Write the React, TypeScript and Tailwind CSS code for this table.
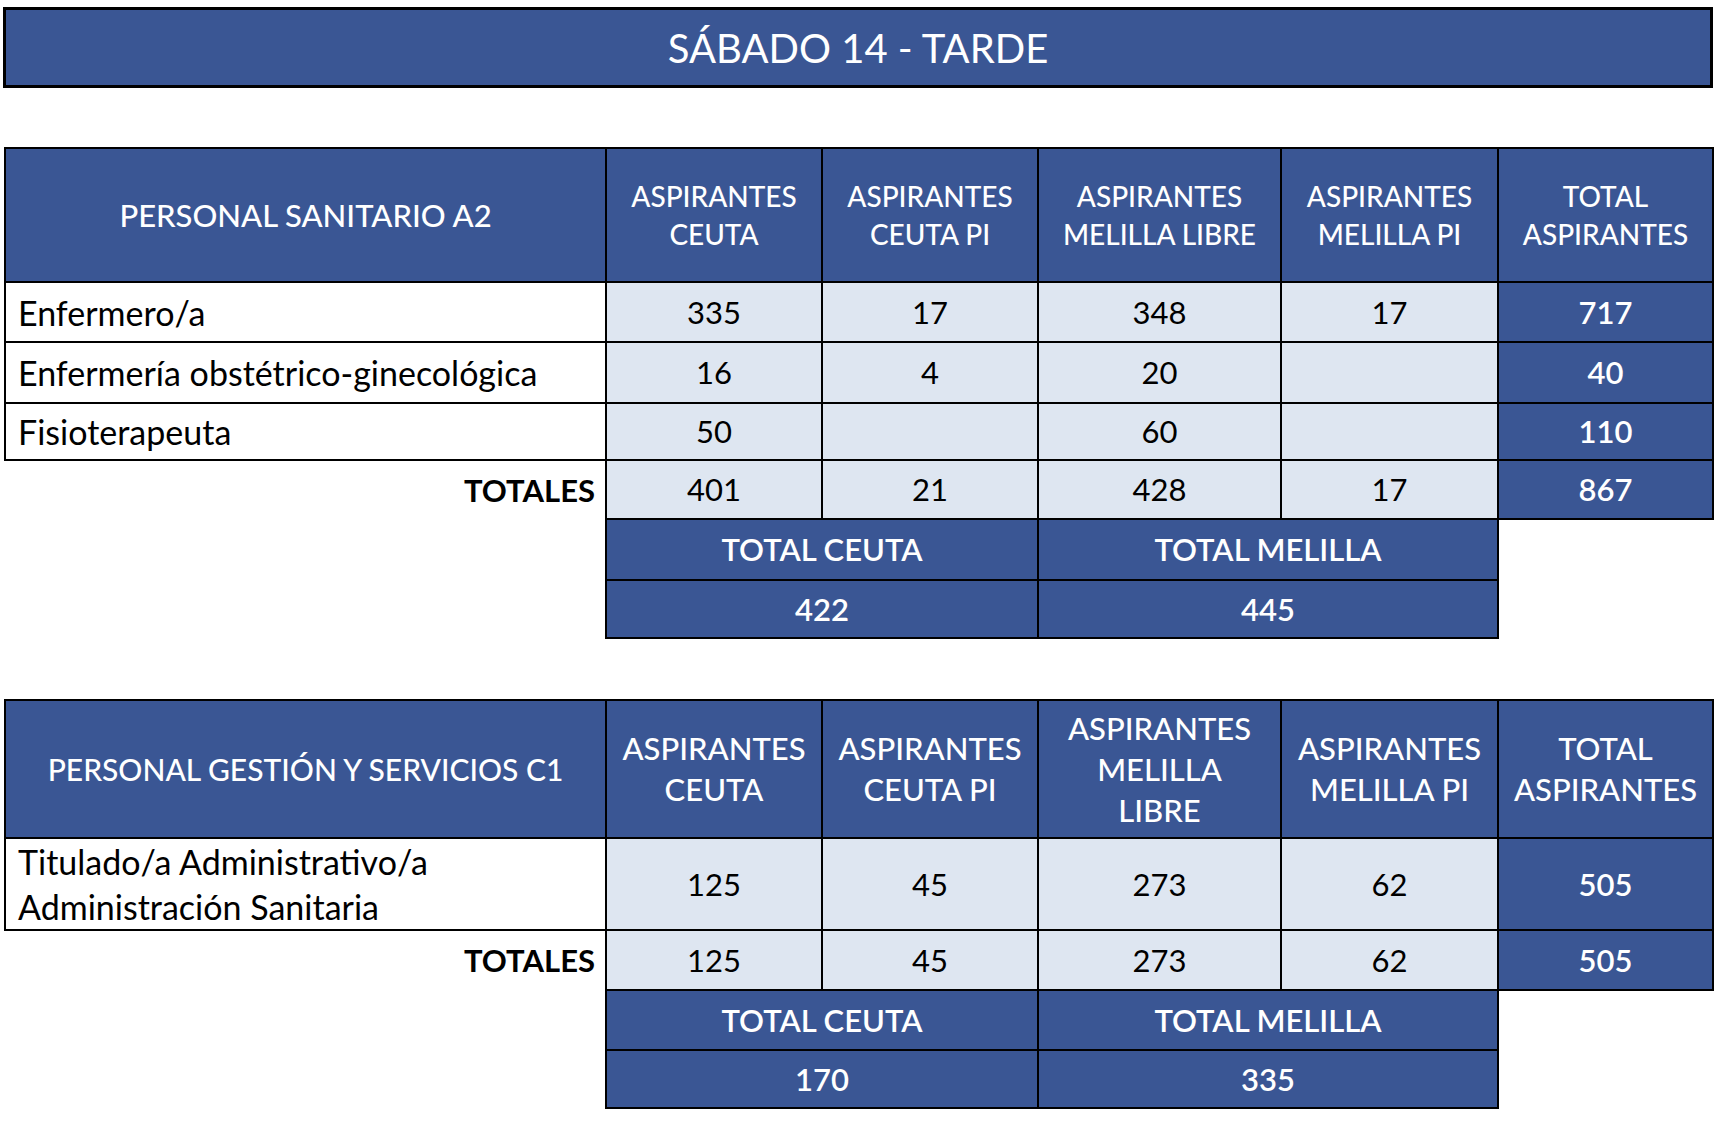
import React from "react";

const blue = "bg-[#3a5694] text-white";
const light = "bg-[#dee6f1] text-black";
const line = "border-2 border-black";

type Row = { name: string[]; vals: (number | null)[]; total: number };

const sanitario: Row[] = [
  { name: ["Enfermero/a"], vals: [335, 17, 348, 17], total: 717 },
  { name: ["Enfermería obstétrico-ginecológica"], vals: [16, 4, 20, null], total: 40 },
  { name: ["Fisioterapeuta"], vals: [50, null, 60, null], total: 110 },
];

const gestion: Row[] = [
  {
    name: ["Titulado/a Administrativo/a", "Administración Sanitaria"],
    vals: [125, 45, 273, 62],
    total: 505,
  },
];

function Cols() {
  return (
    <colgroup>
      <col className="w-[601px]" />
      <col className="w-[216px]" />
      <col className="w-[216px]" />
      <col className="w-[243px]" />
      <col className="w-[217px]" />
      <col className="w-[215px]" />
    </colgroup>
  );
}

function Block({
  title,
  heads,
  rows,
  totals,
  ceuta,
  melilla,
  big,
}: {
  title: string;
  heads: string[][];
  rows: Row[];
  totals: (number | null)[];
  ceuta: number;
  melilla: number;
  big?: boolean;
}) {
  const headText = big ? "text-[31px] leading-[41px]" : "text-[28px] leading-[38px]";
  const titleText = big ? "text-[30px]" : "text-[31px]";
  const rowH = big ? ["h-[92px]"] : ["h-[60px]", "h-[61px]", "h-[57px]"];
  const grand = totals.reduce<number>((a, b) => a + (b ?? 0), 0);
  return (
    <table className="ml-[4px] w-[1708px] table-fixed border-collapse">
      <Cols />
      <tbody>
        <tr className={big ? "h-[138px]" : "h-[134px]"}>
          <td className={`${line} ${blue} ${titleText} text-center font-medium`}>{title}</td>
          {heads.map((h, i) => (
            <td key={i} className={`${line} ${blue} ${headText} text-center font-medium`}>
              {h.map((l) => (
                <div key={l}>{l}</div>
              ))}
            </td>
          ))}
        </tr>
        {rows.map((r, ri) => (
          <tr key={r.name[0]} className={rowH[ri]}>
            <td className={`${line} bg-white pl-[12px] text-[34px] leading-[45px] text-black`}>
              {r.name.map((n) => (
                <div key={n}>{n}</div>
              ))}
            </td>
            {r.vals.map((v, i) => (
              <td key={i} className={`${line} ${light} text-center text-[31px]`}>
                {v ?? ""}
              </td>
            ))}
            <td className={`${line} ${blue} text-center text-[31px] font-semibold`}>{r.total}</td>
          </tr>
        ))}
        <tr className={big ? "h-[60px]" : "h-[59px]"}>
          <td className="pr-[10px] text-right text-[31px] font-bold text-black">TOTALES</td>
          {totals.map((v, i) => (
            <td key={i} className={`${line} ${light} text-center text-[31px]`}>
              {v}
            </td>
          ))}
          <td className={`${line} ${blue} text-center text-[31px] font-semibold`}>{grand}</td>
        </tr>
        <tr className={big ? "h-[60px]" : "h-[61px]"}>
          <td />
          <td colSpan={2} className={`${line} ${blue} text-center text-[31px] font-semibold`}>
            TOTAL CEUTA
          </td>
          <td colSpan={2} className={`${line} ${blue} text-center text-[31px] font-semibold`}>
            TOTAL MELILLA
          </td>
          <td />
        </tr>
        <tr className="h-[58px]">
          <td />
          <td colSpan={2} className={`${line} ${blue} text-center text-[31px] font-semibold`}>
            {ceuta}
          </td>
          <td colSpan={2} className={`${line} ${blue} text-center text-[31px] font-semibold`}>
            {melilla}
          </td>
          <td />
        </tr>
      </tbody>
    </table>
  );
}

export default function App() {
  return (
    <div className="min-h-[1130px] w-[1716px] bg-white pt-[7px] font-['Lato','Liberation_Sans',sans-serif]">
      <div className="ml-[3px] flex h-[81px] w-[1710px] items-center justify-center border-[3px] border-black bg-[#3a5694] text-[40px] text-white">
        SÁBADO 14 - TARDE
      </div>
      <div className="mt-[59px]">
        <Block
          title="PERSONAL SANITARIO A2"
          heads={[
            ["ASPIRANTES", "CEUTA"],
            ["ASPIRANTES", "CEUTA PI"],
            ["ASPIRANTES", "MELILLA LIBRE"],
            ["ASPIRANTES", "MELILLA PI"],
            ["TOTAL", "ASPIRANTES"],
          ]}
          rows={sanitario}
          totals={[401, 21, 428, 17]}
          ceuta={422}
          melilla={445}
        />
      </div>
      <div className="mt-[60px]">
        <Block
          big
          title="PERSONAL GESTIÓN Y SERVICIOS C1"
          heads={[
            ["ASPIRANTES", "CEUTA"],
            ["ASPIRANTES", "CEUTA PI"],
            ["ASPIRANTES", "MELILLA", "LIBRE"],
            ["ASPIRANTES", "MELILLA PI"],
            ["TOTAL", "ASPIRANTES"],
          ]}
          rows={gestion}
          totals={[125, 45, 273, 62]}
          ceuta={170}
          melilla={335}
        />
      </div>
    </div>
  );
}
